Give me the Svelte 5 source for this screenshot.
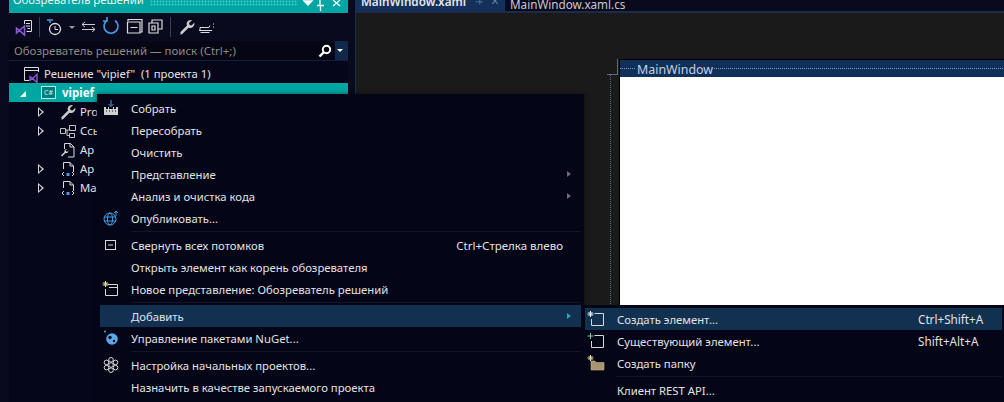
<script>
	const tree = [
		{ label: 'Pro', arrow: true, icon: 'wrench' },
		{ label: 'Ссы', arrow: true, icon: 'refs' },
		{ label: 'Ap', arrow: false, icon: 'config' },
		{ label: 'Ap', arrow: true, icon: 'xaml' },
		{ label: 'Ma', arrow: true, icon: 'xaml' }
	];

	const menu = [
		{ label: 'Собрать', icon: 'build' },
		{ label: 'Пересобрать' },
		{ label: 'Очистить' },
		{ label: 'Представление', sub: true },
		{ label: 'Анализ и очистка кода', sub: true },
		{ label: 'Опубликовать...', icon: 'globe' },
		{ sep: true },
		{ label: 'Свернуть всех потомков', icon: 'collapse', keys: 'Ctrl+Стрелка влево' },
		{ label: 'Открыть элемент как корень обозревателя' },
		{ label: 'Новое представление: Обозреватель решений', icon: 'newview' },
		{ sep: true },
		{ label: 'Добавить', sub: true, active: true },
		{ label: 'Управление пакетами NuGet...', icon: 'nuget' },
		{ sep: true },
		{ label: 'Настройка начальных проектов...', icon: 'gear' },
		{ label: 'Назначить в качестве запускаемого проекта' }
	];

	const submenu = [
		{ label: 'Создать элемент...', icon: 'newitem', keys: 'Ctrl+Shift+A', active: true },
		{ label: 'Существующий элемент...', icon: 'existing', keys: 'Shift+Alt+A' },
		{ label: 'Создать папку', icon: 'folder' },
		{ sep: true },
		{ label: 'Клиент REST API...' }
	];
</script>

{#snippet icon(name)}
	<svg class="ico" width="18" height="18" viewBox="0 0 18 18" fill="none" stroke="#d8d8d8" stroke-width="1">
		{#if name === 'build'}
			<path d="M9 1v6M6.500 5 9 7.500 11.500 5" stroke="#4a9ae0" />
			<path d="M2 8h2v2h2V8h1v2h4V8h1v2h2V8h2v8H2z" fill="#d0d0d0" stroke="none" />
			<path d="M4 12h1M7 12h1M10 12h1M13 12h1" stroke="#111" />
		{:else if name === 'globe'}
			<circle cx="8" cy="10" r="6" stroke="#4a9ae0" />
			<ellipse cx="8" cy="10" rx="2.600" ry="6" stroke="#4a9ae0" />
			<path d="M2 8h12M2 12h12" stroke="#4a9ae0" />
			<path d="M14 7V2M12 4l2-2 2 2" stroke="#4a9ae0" />
		{:else if name === 'collapse'}
			<rect x="3.500" y="4.500" width="10" height="9" />
			<path d="M6 9h5" />
		{:else if name === 'newview'}
			<path d="M5.500 4.500h10v11h-12V9" />
			<path d="M7 7.500h8.500" />
			<path d="M3.500 1v6M.5 4h6M1.500 2l4 4M5.500 2l-4 4" stroke="#e8dca0" />
		{:else if name === 'nuget'}
			<circle cx="10" cy="10" r="5.800" fill="#5aa8e8" stroke="none" />
			<circle cx="8" cy="8.500" r="1.700" fill="#0a0a20" stroke="none" />
			<circle cx="12" cy="12" r="1.200" fill="#0a0a20" stroke="none" />
			<circle cx="3" cy="2.500" r="1" fill="#5aa8e8" stroke="none" />
		{:else if name === 'gear'}
			<circle cx="9" cy="9" r="2.300" />
			<circle cx="9" cy="3.800" r="2.300" />
			<circle cx="13.500" cy="6.400" r="2.300" />
			<circle cx="13.500" cy="11.600" r="2.300" />
			<circle cx="9" cy="14.200" r="2.300" />
			<circle cx="4.500" cy="11.600" r="2.300" />
			<circle cx="4.500" cy="6.400" r="2.300" />
		{:else if name === 'newitem'}
			<path d="M7.500 3.500h9v12h-12V9" />
			<path d="M3.500 1v6M.5 4h6M1.500 2l4 4M5.500 2l-4 4" stroke="#f0f0f0" />
		{:else if name === 'existing'}
			<path d="M7.500 3.500h9v12h-12V9" />
			<path d="M3.500 1v6M.5 4h6" stroke="#6fd08c" />
		{:else if name === 'folder'}
			<path d="M5 7h3l1 1.500h8V16H4V7z" fill="#a89470" stroke="#c8b488" stroke-width=".6" />
			<path d="M3.500 1v6M.5 4h6M1.500 2l4 4M5.500 2l-4 4" stroke="#e8dca0" />
		{:else if name === 'wrench'}
			<path d="M3 16c-1-1-1-1.500 0-2.500l6-6C8 5 9.500 2 13 2l1 .3-3 2.700.5 2 2 .5 2.800-2.800c.7 3.800-2.800 6-5.800 5.100l-6 6c-1 1-1.500 1-2.500.2z" fill="#c8c8c8" stroke="none" />
		{:else if name === 'refs'}
			<path d="M1.500 6.500h5v5h-5zM10.500 3.500h6v5h-6zM10.500 11.500h5v4h-5zM6.500 8h4M8 8v5.500h2.500" stroke-width=".9" />
		{:else if name === 'config'}
			<path d="M5.500 8V2.500h6l3.500 3.500v10H9" />
			<path d="M11 2.500V6h4" />
			<path d="M2 14.500l3.500-3.500c-.5-1.500.5-3 2.500-3L6.500 9.500l1.500 1.500 1.500-1.500c0 2-1.500 3-3 2.500L3 15.500z" fill="#d8d8d8" stroke="none" />
		{:else if name === 'xaml'}
			<path d="M4.500 9V2.500h6.500l3.500 3.500v6" />
			<path d="M11 2.500V6h3.500" />
			<path d="M5 12l-2 2 2 2M13 12l2 2-2 2" />
			<rect x="7.500" y="13" width="3" height="3" fill="#4a9ae0" stroke="none" />
		{/if}
	</svg>
{/snippet}

{#snippet rows(items)}
	{#each items as item}
		{#if item.sep}
			<div class="sep"></div>
		{:else}
			<div class="item" class:active={item.active}>
				<span class="gutter">{#if item.icon}{@render icon(item.icon)}{/if}</span>
				<span>{item.label}</span>
				<span class="keys">{item.keys ?? ''}</span>
				<span class="caret" class:on={item.sub}></span>
			</div>
		{/if}
	{/each}
{/snippet}

<div class="screen">
	<aside class="panel">
		<header class="title">
			<span class="title-text">Обозреватель решений</span>
			<span class="grip"></span>
			<svg width="48" height="13" viewBox="0 0 48 13" fill="none" stroke="#fff" stroke-width="1.300">
				<path d="M4 1l4 4 4-4z" fill="#fff" />
				<path d="M20 0v5M17 5.500h7M20.500 6v5" />
				<path d="M33 0l7 6M40 0l-7 6" />
			</svg>
		</header>

		<div class="tools">
			<svg width="22" height="26" viewBox="0 0 22 26" fill="none" stroke="#ddd">
				<path d="M11.500 10V6.500h7v11h-5" />
				<path d="M13 9.500h4M13 12h4M14.500 14.500h2.500" />
				<path d="M3.500 14l3 2.500-3 2.500zM11.500 12l-5 4.500 5 4.500z" stroke="#8d5bd6" stroke-width="1.500" />
			</svg>
			<i class="bar"></i>
			<svg class="clock" width="40" height="26" viewBox="0 0 40 26" fill="none" stroke="#ddd">
				<path d="M3 6h6M6 6v3" stroke="#4a9ae0" stroke-width="1.500" />
				<circle cx="11" cy="15" r="5.500" stroke-width="1.300" />
				<path d="M11 12v3.500h3" />
				<path d="M25 12l3 3 3-3z" fill="#999" stroke="none" />
			</svg>
			<svg width="18" height="26" viewBox="0 0 18 26" fill="none" stroke="#ccc">
				<path d="M0 10.500h13M3 8l-3 2.500L3 13M0 15.500h13M10 13l3 2.500-3 2.500" />
			</svg>
			<svg width="20" height="26" viewBox="0 0 20 26" fill="none" stroke="#4a9ae0" stroke-width="1.600">
				<path d="M6 6.500A7 7 0 1 0 14 6.500M6 3v4H2" />
			</svg>
			<svg class="pad" width="20" height="26" viewBox="0 0 20 26" fill="none" stroke="#ddd" stroke-width="1.200">
				<path d="M3 7V5.500h14v12.500h-2M2.500 8h12.500v11H2.500zM5.500 13.500h7" />
			</svg>
			<svg width="20" height="26" viewBox="0 0 20 26" fill="none" stroke="#ddd" stroke-width="1.200">
				<path d="M6 9V6h10v9h-4M3 9h9v10H3z" />
				<path d="M6 12h3v4H6z" />
			</svg>
			<i class="bar"></i>
			<svg class="pad" width="18" height="18" viewBox="0 0 18 18">
				<path d="M3 16c-1-1-1-1.500 0-2.500l6-6C8 5 9.500 2 13 2l1 .3-3 2.700.5 2 2 .5 2.800-2.800c.7 3.800-2.800 6-5.800 5.100l-6 6c-1 1-1.500 1-2.500.2z" fill="#ccc" />
			</svg>
			<svg width="20" height="26" viewBox="0 0 20 26" fill="none" stroke="#ddd">
				<path d="M2 16.500h13M3 16.500v-3h9l1-2M3.500 18.500h9M16 10h1M16 13h1" />
			</svg>
		</div>

		<div class="search">
			<span class="hint">Обозреватель решений — поиск (Ctrl+;)</span>
			<svg width="14" height="14" viewBox="0 0 14 14" fill="none" stroke="#fff" stroke-width="2">
				<circle cx="8.500" cy="5.500" r="3.700" />
				<path d="M5.500 8.500 1.500 12.500" stroke-width="2.400" />
			</svg>
			<span class="drop"></span>
		</div>

		<div class="row solution">
			<svg width="18" height="18" viewBox="0 0 18 18" fill="none" stroke="#ddd">
				<path d="M5 15.500H.5v-13h14V7M.5 5.500h14" />
				<path d="M6 11.500l2.500 2-2.500 2zM13 9.500l-4.500 4 4.500 4z" stroke="#8d5bd6" stroke-width="1.300" />
			</svg>
			<span>Решение "vipief"&nbsp; (1 проекта 1)</span>
		</div>
		<div class="row project">
			<span class="open"></span>
			<span class="cs">C#</span>
			<b>vipief</b>
		</div>
		{#each tree as node}
			<div class="row node">
				<span class="closed" class:on={node.arrow}></span>
				{@render icon(node.icon)}
				<span>{node.label}</span>
			</div>
		{/each}
	</aside>

	<main class="editor">
		<nav class="tabs">
			<div class="tab on">
				<span>MainWindow.xaml</span>
				<svg width="40" height="12" viewBox="0 0 40 12" fill="none" stroke="#6a80a0">
					<path d="M3 4.500h5M8.500 1v7M8.500 4.500H12" />
					<path d="M24 0l7 7M31 0l-7 7" stroke-width="1.300" />
				</svg>
			</div>
			<div class="tab">MainWindow.xaml.cs</div>
		</nav>
		<div class="surface">
			<div class="guides">
				<span class="corner"></span>
				<span class="dots"></span>
			</div>
			<div class="window">
				<div class="winbar"><span>MainWindow</span></div>
				<div class="winbody"></div>
			</div>
		</div>
	</main>

	<div class="menu main-menu">{@render rows(menu)}</div>
	<div class="menu sub-menu">{@render rows(submenu)}</div>
</div>

<style>
	:global(body) {
		margin: 0;
		background: #0a0a1e;
	}

	.screen {
		position: relative;
		display: flex;
		width: 1004px;
		height: 402px;
		overflow: hidden;
		font: 11.3px "Noto Sans", "Open Sans", sans-serif;
		color: #e2e2e2;
		background: #0a0a1e;
	}

	.panel {
		width: 339px;
		margin-left: 9px;
		flex: none;
		background: #06061a;
	}

	.title {
		display: flex;
		align-items: flex-start;
		height: 13px;
		padding-left: 4px;
		background: #00a6a2;
		overflow: hidden;
	}

	.title-text {
		margin-top: -9px;
		font-size: 11.300px;
		line-height: 18px;
		color: #f2f2f2;
	}

	.grip {
		flex: 1;
		height: 6px;
		margin: 0 2px 0 6px;
		background: radial-gradient(#3fc6c2 45%, transparent 50%) 0 0 / 3px 3px;
	}

	.tools {
		display: flex;
		align-items: center;
		gap: 1px;
		height: 28px;
		padding-left: 4px;
		background: #0a0a1e;
	}

	.bar {
		width: 1px;
		height: 20px;
		margin: 0 3px;
		background: #3a3f55;
	}

	.clock {
		margin-right: -3px;
	}

	.pad {
		margin-left: 3px;
	}

	.search {
		display: flex;
		align-items: center;
		height: 20px;
		padding-left: 5px;
		background: #050514;
		border-bottom: 1px solid #12213d;
		box-sizing: border-box;
	}

	.hint {
		flex: 1;
		font-size: 11.500px;
		color: #8b8b8b;
	}

	.drop {
		position: relative;
		width: 13px;
		height: 100%;
		margin-left: 3px;
		background: #10294a;
	}

	.drop::after {
		content: "";
		position: absolute;
		left: 2px;
		top: 8px;
		border: 3px solid transparent;
		border-top-color: #fff;
	}

	.row {
		display: flex;
		align-items: center;
		height: 19px;
		white-space: nowrap;
	}

	.solution {
		gap: 2px;
		margin-top: 3px;
		padding-left: 15px;
	}

	.project {
		background: #00a6a2;
		color: #fff;
		padding-left: 11px;
	}

	.project b {
		margin-left: 6px;
		font-size: 11.500px;
	}

	.open {
		width: 0;
		height: 0;
		margin: 3px 15px 0 0;
		border: 3px solid #fff;
		border-color: transparent #fff #fff transparent;
	}

	.cs {
		width: 13px;
		height: 11px;
		border: 1px solid #b7ece4;
		background: #007f7a;
		color: #d5f5ef;
		font-size: 7px;
		line-height: 11px;
		text-align: center;
	}

	.node {
		padding-left: 29px;
		gap: 3px;
	}

	.closed {
		position: relative;
		width: 0;
		height: 0;
		margin-right: 12px;
		border: 5px solid transparent;
		border-right-width: 0;
		border-left-width: 6px;
	}

	.closed.on {
		border-left-color: #d8d8d8;
	}

	.closed.on::after {
		content: "";
		position: absolute;
		left: -5px;
		top: -3px;
		border: 3px solid transparent;
		border-right-width: 0;
		border-left: 3px solid #06061a;
	}

	.editor {
		flex: 1;
		display: flex;
		flex-direction: column;
		margin-left: 7px;
		border-left: 1px solid #1a2c4a;
	}

	.tabs {
		display: flex;
		height: 11px;
		border-bottom: 2px solid #1a2c4a;
		background: #0a0a1e;
		font-size: 11.700px;
		line-height: 9px;
		overflow: hidden;
		flex: none;
	}

	.tab {
		display: flex;
		padding-left: 5px;
		color: #c8c8d0;
	}

	.tab span,
	.tab svg {
		margin-top: -3px;
	}

	.tab.on {
		gap: 7px;
		width: 144px;
		background: #12305a;
		color: #e8e8e8;
		font-weight: 600;
	}

	.surface {
		flex: 1;
		display: flex;
		justify-content: flex-end;
		padding-top: 46px;
		background: #1a1a1a;
	}

	.guides {
		display: flex;
		flex-direction: column;
		width: 11px;
		margin-right: 1px;
	}

	.corner {
		height: 15px;
		border-right: 1px solid #5a6a90;
		border-bottom: 1px solid #5a6a90;
	}

	.dots {
		flex: 1;
		width: 1px;
		margin-left: 3px;
		background: linear-gradient(#5a6a90 50%, transparent 50%) 0 0 / 1px 2px;
	}

	.window {
		width: 384px;
		border-top: 1px solid #000;
		border-left: 1px solid #000;
	}

	.winbar {
		height: 17px;
		background:
			linear-gradient(90deg, #7f9cc8 50%, transparent 50%) 0 8px / 2px 1px repeat-x,
			#10305a;
		font-size: 12.400px;
		line-height: 19px;
		color: #c8d0e0;
	}

	.winbar span {
		display: inline-block;
		height: 17px;
		margin-left: 16px;
		padding: 0 1px;
		background: #10305a;
	}

	.winbody {
		height: 228px;
		background: #fff;
	}

	.menu {
		position: absolute;
		box-sizing: border-box;
		background: #050518;
	}

	.main-menu {
		left: 97px;
		top: 94px;
		width: 487px;
		height: 308px;
		padding: 3px 3px 0;
		box-shadow: 0 0 4px rgba(0, 0, 0, .5);
	}

	.sub-menu {
		left: 584px;
		top: 305px;
		width: 420px;
		height: 97px;
		padding: 3px 2px 0 1px;
	}

	.item {
		display: grid;
		grid-template-columns: 31px 1fr auto 18px;
		align-items: center;
		height: 22px;
		white-space: nowrap;
	}

	.keys {
		font-size: 11.500px;
	}

	.sub-menu .item {
		grid-template-columns: 32px 1fr auto 17px;
	}

	.sub-menu .keys {
		width: 67px;
		font-size: 11.700px;
	}

	.item.active {
		background: #12304f;
	}

	.gutter {
		display: flex;
		padding-left: 2px;
	}

	.sep {
		height: 1px;
		margin: 2px 0 2px 31px;
		background: #13132a;
	}

	.caret.on {
		width: 0;
		height: 0;
		margin-left: 4px;
		border: 3px solid transparent;
		border-left: 4px solid #6a6a78;
	}

	.active .caret.on {
		border-left-color: #2aa6b8;
	}
</style>
